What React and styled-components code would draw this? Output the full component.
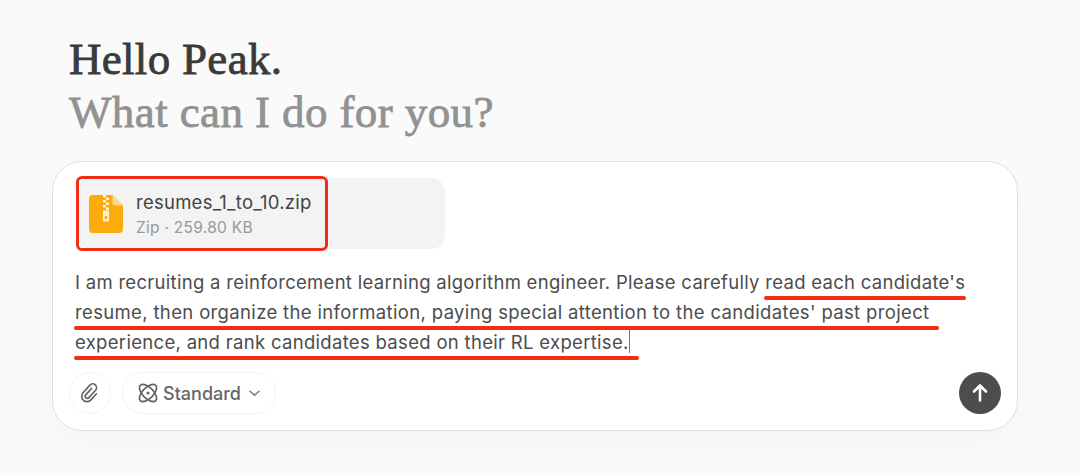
import React from "react";
import styled, { createGlobalStyle } from "styled-components";

const promptLines = [
  { plain: "I am recruiting a reinforcement learning algorithm engineer. Please carefully ", marked: "read each candidate's", extra: 1, spacing: "0.29px" },
  { plain: "", marked: "resume, then organize the information, paying special attention to the candidates' past project", extra: 9, spacing: "0.35px" },
  { plain: "", marked: "experience, and rank candidates based on their RL expertise.", extra: 10, spacing: "0.31px", caret: true },
];

function ZipIcon() {
  return (
    <svg width="34" height="38" viewBox="0 0 34 38">
      <path d="M4 0H23.5L34 10.5V34a4 4 0 0 1-4 4H4a4 4 0 0 1-4-4V4a4 4 0 0 1 4-4Z" fill="#fbab0b" />
      <path d="M23.5 0L34 10.5H26a2.500 2.500 0 0 1-2.500-2.500Z" fill="#fdd78c" />
      <g fill="#fff3d9">
        <path d="M14 0h3v2.500h-3zM17 2.500h3v2.500h-3zM14 5h3v2.500h-3zM17 7.500h3v2.500h-3zM14 10h3v2.500h-3zM17 12.500h3v2.500h-3z" />
        <path fillRule="evenodd" d="M14 15.500h6v9.500a1.500 1.500 0 0 1-1.500 1.500h-3a1.500 1.500 0 0 1-1.500-1.500zM15.800 21h2.400v3h-2.400z" />
      </g>
    </svg>
  );
}

function ClipIcon() {
  return (
    <svg width="22" height="22" viewBox="0 0 22 22" fill="none" stroke="#666" strokeWidth="1.700" strokeLinecap="round" strokeLinejoin="round">
      <path
        d="M16.300 7.500V15.500a5.300 5.300 0 0 1-10.600 0V5.200a3.800 3.800 0 0 1 7.600 0V15.200a2.100 2.100 0 0 1-4.200 0V6.500"
        transform="rotate(42 11 11)"
      />
    </svg>
  );
}

function AtomIcon() {
  return (
    <svg width="20" height="20" viewBox="0 0 20 20" fill="none" stroke="#666" strokeWidth="1.700">
      <ellipse cx="10" cy="10" rx="10.800" ry="5.400" transform="rotate(45 10 10)" />
      <ellipse cx="10" cy="10" rx="10.800" ry="5.400" transform="rotate(-45 10 10)" />
      <circle cx="10" cy="10" r="1.500" fill="#666" stroke="none" />
    </svg>
  );
}

function App() {
  return (
    <Page>
      <GlobalStyle />
      <Greeting>
        <Hello>Hello Peak.</Hello>
        <Question>What can I do for you?</Question>
      </Greeting>
      <Composer>
        <FileChip>
          <Highlight>
            <ZipIcon />
            <FileInfo>
              <FileName>resumes_1_to_10.zip</FileName>
              <FileMeta>Zip · 259.80 KB</FileMeta>
            </FileInfo>
          </Highlight>
        </FileChip>
        <Prompt>
          {promptLines.map((line) => (
            <Line key={line.marked} $spacing={line.spacing}>
              {line.plain}
              <Marked $extra={line.extra}>{line.marked}</Marked>
              {line.caret && <Caret />}
            </Line>
          ))}
        </Prompt>
        <Toolbar>
          <RoundButton aria-label="Attach">
            <ClipIcon />
          </RoundButton>
          <ModeButton>
            <AtomIcon />
            <span>Standard</span>
            <svg width="11" height="7" viewBox="0 0 11 7" fill="none" stroke="#777" strokeWidth="1.500" strokeLinecap="round" strokeLinejoin="round">
              <path d="M1 1.200l4.500 4 4.500-4" />
            </svg>
          </ModeButton>
          <SendButton aria-label="Send">
            <svg width="18" height="20" viewBox="0 0 18 20" fill="none" stroke="#fff" strokeWidth="2.600" strokeLinecap="round" strokeLinejoin="round">
              <path d="M9 17.500V2.500M3 8.500L9 2.500 15 8.500" />
            </svg>
          </SendButton>
        </Toolbar>
      </Composer>
    </Page>
  );
}

const GlobalStyle = createGlobalStyle`
  * {
    box-sizing: border-box;
  }

  body {
    margin: 0;
    background: #fafafa;
  }
`;

const Page = styled.main`
  height: 475px;
  padding: 33px 62px 0 52px;
  overflow: hidden;
  font-family: Inter, "Liberation Sans", sans-serif;
`;

const Greeting = styled.header`
  height: 128px;
  padding-left: 17px;
  font-family: "Liberation Serif", serif;
  font-size: 45px;
  line-height: 53px;
  white-space: nowrap;
`;

const Hello = styled.div`
  color: #3a3a3a;
  letter-spacing: 0.3px;
  -webkit-text-stroke: 0.8px #3a3a3a;
`;

const Question = styled.div`
  color: #929292;
  letter-spacing: 0.4px;
  -webkit-text-stroke: 0.8px #929292;
`;

const Composer = styled.section`
  display: flex;
  flex-direction: column;
  width: 966px;
  height: 270px;
  padding: 15px 16px 16px;
  background: #fff;
  border: 1px solid #e0e0e2;
  border-radius: 30px;
  box-shadow: 0 12px 32px rgba(0, 0, 0, 0.025);
`;

const FileChip = styled.div`
  display: flex;
  align-items: center;
  width: 369px;
  height: 71px;
  margin: 1px 0 0 7px;
  background: #f3f3f3;
  border-radius: 14px;
`;

const Highlight = styled.div`
  display: flex;
  flex: none;
  align-items: center;
  gap: 13px;
  width: 252px;
  height: 75px;
  padding: 0 0 0 10px;
  border: 3px solid #f22d12;
  border-radius: 6px;
`;

const FileInfo = styled.div`
  padding-top: 3px;
  white-space: nowrap;
`;

const FileName = styled.div`
  color: #444;
  font-size: 18.5px;
  line-height: 26px;
  letter-spacing: 0.25px;
`;

const FileMeta = styled.div`
  color: #999;
  font-size: 15.5px;
  line-height: 26px;
  letter-spacing: 0.28px;
`;

const Prompt = styled.div`
  padding: 18px 0 0 6px;
  color: #4c4c4c;
  font-size: 18.5px;
  line-height: 30px;
`;

const Line = styled.div`
  display: flex;
  height: 30px;
  letter-spacing: ${(props) => props.$spacing};
  white-space: pre;
`;

const Marked = styled.span`
  position: relative;

  &::after {
    content: "";
    position: absolute;
    right: ${(props) => -props.$extra}px;
    bottom: -3px;
    left: -1px;
    height: 4px;
    background: #f22d12;
    border-radius: 2px;
  }
`;

const Caret = styled.i`
  width: 1px;
  height: 23px;
  margin-top: 3px;
  background: #777;
`;

const Toolbar = styled.div`
  display: flex;
  align-items: center;
  height: 42px;
  margin-top: auto;
`;

const RoundButton = styled.button`
  display: flex;
  align-items: center;
  justify-content: center;
  width: 42px;
  height: 42px;
  padding: 0;
  background: #fff;
  border: 1px solid #f3f3f3;
  border-radius: 50%;
`;

const ModeButton = styled.button`
  display: flex;
  align-items: center;
  width: 154px;
  height: 42px;
  margin-left: 11px;
  padding: 0 0 0 15px;
  color: #666;
  font: 500 18px Inter, sans-serif;
  background: #fff;
  border: 1px solid #f3f3f3;
  border-radius: 21px;

  span {
    margin: 0 8px 0 5px;
  }
`;

const SendButton = styled(RoundButton)`
  margin-left: auto;
  background: #4d4d4d;
  border: 0;
`;

export default App;
